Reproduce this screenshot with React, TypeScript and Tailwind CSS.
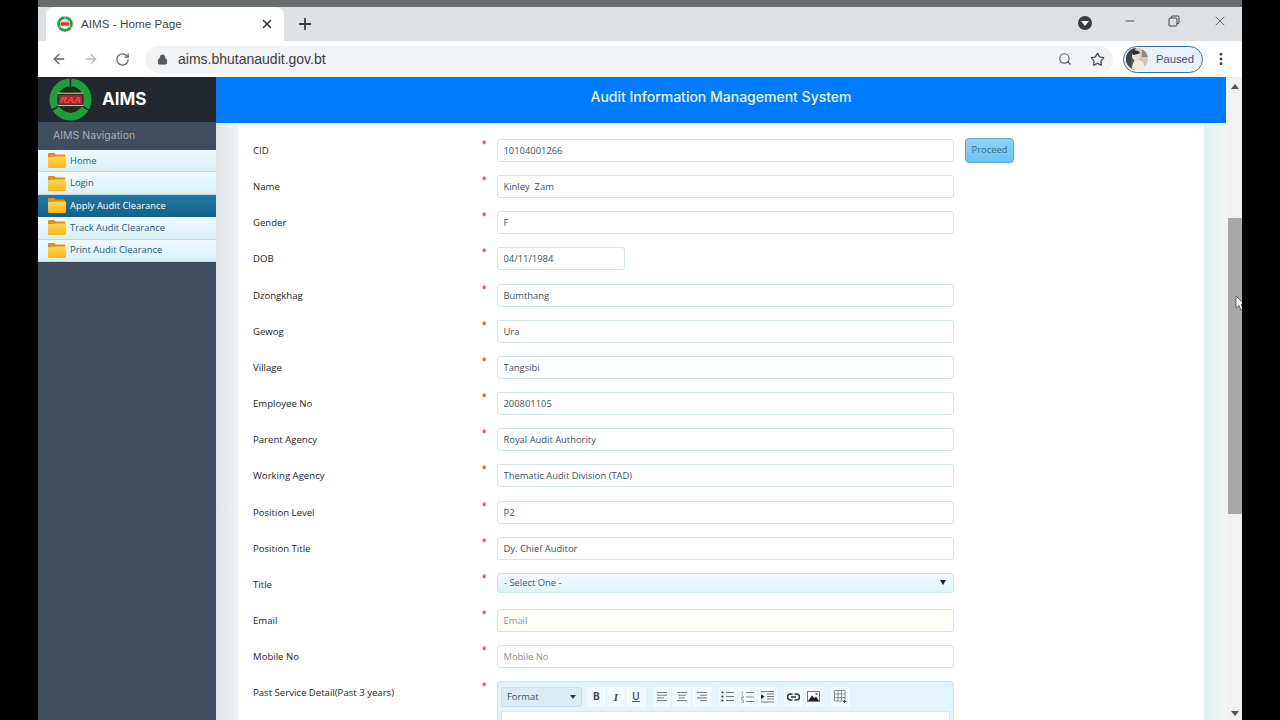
import React from "react";
import { ArrowLeft, ArrowRight, RotateCw, Lock, Search, Star, X, Plus, Minus, MoreVertical } from "lucide-react";

const LogoSvg = ({ size, light }: { size: number; light?: boolean }) => (
  <svg width={size} height={size} viewBox="0 0 44 44" className="shrink-0">
    <circle cx="22" cy="22" r="21.5" fill="#1f9e3d" />
    <circle cx="22" cy="22" r="13.5" fill={light ? "#ffffff" : "#1d2a20"} />
    <path d="M3 33 L13 27 M41 33 L31 27 M22 0 V9" stroke={light ? "#ffffff" : "#23282e"} strokeWidth="1.6" />
    <rect x="9" y="15.5" width="26" height="13" fill={light ? "#ffffff" : "#2c2a22"} />
    <rect x="9" y="15" width="26" height="1.2" fill="#e3c04a" />
    <rect x="10" y="17.5" width="24" height="9" fill="#a62a2c" />
    <rect x="9" y="27.5" width="26" height="1.2" fill="#e3c04a" />
    <text x="22" y="25.5" textAnchor="middle" fontSize="10" fontWeight="700" fontStyle="italic" fill="#f0494c" fontFamily="Liberation Sans, sans-serif">RAA</text>
  </svg>
);

const Folder = () => (
  <svg width="18" height="15" viewBox="0 0 18 15" className="shrink-0">
    <defs>
      <linearGradient id="fg" x1="0" y1="0" x2="0" y2="1">
        <stop offset="0" stopColor="#ffd95a" />
        <stop offset="1" stopColor="#f8b713" />
      </linearGradient>
    </defs>
    <path d="M0 1.2 C0 .5 .5 0 1.2 0 H6 L8 1.6 H16 C16.6 1.6 17 2 17 2.6 V5 H0 Z" fill="#e98d12" />
    <path d="M0 4.2 L8 3.4 H16.8 C17.5 3.4 18 3.9 18 4.6 V13.6 C18 14.4 17.5 15 16.8 15 H1.2 C.5 15 0 14.4 0 13.6 Z" fill="url(#fg)" />
  </svg>
);

const nav = ["Home", "Login", "Apply Audit Clearance", "Track Audit Clearance", "Print Audit Clearance"];

const rows: { label: string; value?: string; placeholder?: string }[] = [
  { label: "CID", value: "10104001266" },
  { label: "Name", value: "Kinley  Zam" },
  { label: "Gender", value: "F" },
  { label: "DOB", value: "04/11/1984" },
  { label: "Dzongkhag", value: "Bumthang" },
  { label: "Gewog", value: "Ura" },
  { label: "Village", value: "Tangsibi" },
  { label: "Employee No", value: "200801105" },
  { label: "Parent Agency", value: "Royal Audit Authority" },
  { label: "Working Agency", value: "Thematic Audit Division (TAD)" },
  { label: "Position Level", value: "P2" },
  { label: "Position Title", value: "Dy. Chief Auditor" },
  { label: "Title" },
  { label: "Email", placeholder: "Email" },
  { label: "Mobile No", placeholder: "Mobile No" },
];

const Label = ({ text }: { text: string }) => (
  <div className="w-[229px] shrink-0 text-[9.6px] font-medium text-[#23272b] leading-[37px]">{text}</div>
);
const Req = () => (
  <div className="w-[15px] shrink-0 text-[8px] font-bold text-[#cf4a45] leading-[12px] pt-[6px]">*</div>
);

const Tool = ({ children }: { children: React.ReactNode }) => (
  <div className="w-[19.6px] h-[20px] flex items-center justify-center text-[#4a4a4a]">{children}</div>
);

const Group = ({ children }: { children: React.ReactNode }) => (
  <div className="flex rounded-[3px] bg-[#f3fafd] divide-x divide-[#e2eff5]">{children}</div>
);

const lineSets: Record<string, number[][]> = {
  left: [[1, 11], [1, 11], [1, 8], [1, 11]],
  center: [[1, 11], [2, 10], [3, 9], [1, 11]],
  right: [[1, 11], [4, 11], [1, 11], [4, 11]],
};
const Lines = ({ kind }: { kind: string }) => (
  <svg width="12" height="11" viewBox="0 0 12 11" stroke="#777" strokeWidth="1">
    {lineSets[kind].map((l, i) => (
      <path key={i} d={`M${l[0]} ${1.5 + i * 2.7} H${l[1]}`} />
    ))}
  </svg>
);
const Bullets = () => (
  <svg width="13" height="11" viewBox="0 0 13 11" stroke="#777" strokeWidth="1" fill="#333">
    <circle cx="1.5" cy="1.5" r="1.1" stroke="none" />
    <circle cx="1.5" cy="5.5" r="1.1" stroke="none" />
    <circle cx="1.5" cy="9.5" r="1.1" stroke="none" />
    <path d="M5 1.5 H13 M5 5.5 H13 M5 9.5 H13" />
  </svg>
);
const Numbers = () => (
  <svg width="13" height="12" viewBox="0 0 13 12" stroke="#888" strokeWidth="1" fill="none">
    <path d="M1.5 0.5 V3.5 M0.5 5 H2.5 V6.5 H0.5 V8 H2.5 M0.5 9.5 H2.5 V11.5 H0.5" strokeWidth="0.7" />
    <path d="M5 1.5 H13 M5 6 H13 M5 10.5 H13" />
  </svg>
);
const Indent = () => (
  <svg width="13" height="12" viewBox="0 0 13 12" stroke="#777" strokeWidth="1">
    <path d="M0 .5 H13 M6 3 H13 M6 5.5 H13 M6 8 H13 M0 11 H13" />
    <path d="M0 3.2 L3.6 5.6 L0 8 Z" fill="#222" stroke="none" />
  </svg>
);
const ImageIcon = () => (
  <svg width="13" height="11" viewBox="0 0 13 11">
    <rect x=".5" y=".5" width="12" height="10" fill="#fff" stroke="#777" />
    <path d="M1 10 L5 4.5 L7.5 7 L9 5.5 L12 10 Z" fill="#222" />
    <circle cx="9.5" cy="2.8" r="1" fill="#555" />
  </svg>
);
const LinkIcon = () => (
  <svg width="13" height="8" viewBox="0 0 13 8" fill="none" stroke="#333" strokeWidth="1.5">
    <path d="M5.5 1 H3.5 A2.8 2.8 0 0 0 3.5 7 H5.5 M7.5 1 H9.5 A2.8 2.8 0 0 1 9.5 7 H7.5 M4 4 H9" />
  </svg>
);
const TableIcon = () => (
  <svg width="13" height="13" viewBox="0 0 13 13" fill="none" stroke="#8a8a8a" strokeWidth="0.9">
    <path d="M.5 .5 H11 V11 H.5 Z M4 .5 V11 M7.5 .5 V11 M.5 4 H11 M.5 7.5 H11" />
    <path d="M10.5 10 V13 M9 11.5 H12.5" stroke="#444" strokeWidth="1" />
  </svg>
);

export default function App() {
  return (
    <div className="w-[1280px] h-[720px] overflow-hidden bg-black flex justify-center font-['Open_Sans',sans-serif]">
      <div className="w-[1204px] h-[720px] flex flex-col bg-white">
        <div className="h-[7px] bg-[#6a6d6d]" />
        {/* tab strip */}
        <div className="h-[34px] bg-[#dee1e4] flex items-end pl-[8px]">
          <div className="w-[238px] h-[34px] bg-white rounded-t-[8px] flex items-center pl-[11px] pr-[10px]">
            <LogoSvg size={16} light />
            <span className="ml-[8px] text-[11.7px] text-[#45494d] font-['Liberation_Sans',sans-serif]">AIMS - Home Page</span>
            <X size={14} strokeWidth={2.4} className="ml-auto text-[#222]" />
          </div>
          <div className="h-[34px] flex items-center ml-[12px]">
            <Plus size={18} strokeWidth={2.4} className="text-[#3a3d40]" />
          </div>
          <div className="ml-auto h-[34px] flex items-start">
            <div className="w-[14px] h-[14px] rounded-full bg-[#3a3d40] mt-[9px] mr-[31px] flex items-center justify-center">
              <div className="w-0 h-0 border-l-[4px] border-r-[4px] border-t-[5px] border-l-transparent border-r-transparent border-t-white" />
            </div>
            <Minus size={14} className="text-[#444] mt-[7px] mr-[31px]" strokeWidth={1.5} />
            <svg width="12" height="12" viewBox="0 0 12 12" className="mt-[8px] mr-[32px]" fill="none" stroke="#444" strokeWidth="1">
              <rect x="1" y="3" width="8" height="8" rx="1" />
              <path d="M3.5 3 V1.5 C3.5 1 4 1 4 1 H10 C10.6 1 11 1.4 11 2 V8 C11 8.5 10.6 8.5 10.5 8.5 H9" />
            </svg>
            <X size={16} className="text-[#444] mt-[6px] mr-[14px]" strokeWidth={1.2} />
          </div>
        </div>
        {/* toolbar */}
        <div className="h-[36px] bg-white flex items-center pl-[13px] pr-[13px]">
          <ArrowLeft size={16} className="text-[#5f6368]" strokeWidth={2} />
          <ArrowRight size={16} className="text-[#b9bcc0] ml-[16px]" strokeWidth={2} />
          <RotateCw size={15} className="text-[#5f6368] ml-[16px]" strokeWidth={2} />
          <div className="ml-[15px] w-[968px] h-[27px] rounded-full bg-[#f1f3f4] flex items-center pl-[12px] pr-[8px]">
            <Lock size={11} className="text-[#55585c]" fill="#55585c" />
            <span className="ml-[10px] text-[14px] text-[#3c4043] font-['Liberation_Sans',sans-serif]">aims.bhutanaudit.gov.bt</span>
            <Search size={14} className="text-[#5f6368] ml-auto" strokeWidth={2} />
            <Star size={15} className="text-[#4a4d50] ml-[18px]" strokeWidth={2} />
          </div>
          <div className="ml-[10px] w-[80px] h-[27px] rounded-full border border-[#3f6e96] bg-[#eaf0f7] flex items-center pl-[2px]">
            <svg width="22" height="22" viewBox="0 0 22 22" className="shrink-0">
              <defs>
                <clipPath id="av"><circle cx="11" cy="11" r="11" /></clipPath>
              </defs>
              <g clipPath="url(#av)">
                <rect width="22" height="22" fill="#cfc8b8" />
                <rect width="8" height="22" fill="#5a5f63" />
                <path d="M0 0 H10 L6 8 L4 22 H0 Z" fill="#3e454b" />
                <circle cx="10" cy="8" r="4" fill="#e8dfd2" />
                <path d="M6 22 C6 14 9 12 12 12 C16 12 19 16 19 22 Z" fill="#f0ebe2" />
                <rect x="16" y="2" width="6" height="7" fill="#8f8b7f" />
                <path d="M6 4 C8 2 12 2 14 5 L12 6 L7 7 Z" fill="#2b2b2b" />
              </g>
            </svg>
            <span className="ml-[8px] text-[11.2px] text-[#4b5a72] font-['Liberation_Sans',sans-serif]">Paused</span>
          </div>
          <MoreVertical size={16} className="text-[#444] ml-[10px]" strokeWidth={2.4} />
        </div>
        {/* page */}
        <div className="flex-1 flex min-h-0">
          <div className="w-[178px] shrink-0 bg-[#3f4d5f] flex flex-col">
            <div className="h-[45px] bg-[#23282e] flex items-center pl-[11px]">
              <LogoSvg size={43} />
              <span className="ml-[10px] text-[17px] font-bold text-white font-['Inter',sans-serif]">AIMS</span>
            </div>
            <div className="h-[28px] flex items-center pl-[15px] text-[10.5px] text-[#a5aeb8] font-['Inter',sans-serif]">AIMS Navigation</div>
            <div className="flex flex-col">
              {nav.map((n, i) => (
                <div
                  key={n}
                  className={
                    "h-[22.4px] flex items-center pl-[10px] text-[9.4px] " +
                    (i === 2
                      ? "bg-[linear-gradient(#2179a6,#145f86)] text-white"
                      : "bg-[linear-gradient(#f0fbff,#d8eff7)] border-b border-[#c0d8e2] text-[#2a5a74]")
                  }
                >
                  <Folder />
                  <span className="ml-[4px]">{n}</span>
                </div>
              ))}
            </div>
          </div>
          <div className="w-[1011px] shrink-0 flex flex-col min-h-0">
            <div className="h-[46px] w-[1010px] shrink-0 bg-[#007bff] flex items-center justify-center pb-[8px] text-[14px] font-medium text-[#eaf3ff] font-['Inter',sans-serif]">
              Audit Information Management System
            </div>
            <div className="flex-1 flex min-h-0 bg-[#eef1f2]">
              <div className="w-[22px] shrink-0 bg-[linear-gradient(90deg,#dfe3e5,#f1f3f4)]" />
              <div className="w-[966px] shrink-0 bg-white pt-[9px] pl-[15px] overflow-hidden">
                {rows.map((r) => (
                  <div key={r.label} className="flex h-[36.17px] items-start">
                    <Label text={r.label} />
                    <Req />
                    {r.label === "Title" ? (
                      <div className="w-[457px] h-[20px] mt-[7px] rounded-[3px] border border-[#cde2ea] bg-[linear-gradient(#f2fbfe,#dff1f8)] flex items-center pl-[6px] pr-[7px] text-[9.4px] text-[#3e6072]">
                        <span>- Select One -</span>
                        <span className="ml-auto w-0 h-0 border-l-[3px] border-r-[3px] border-t-[5px] border-l-transparent border-r-transparent border-t-[#222]" />
                      </div>
                    ) : (
                      <input
                        readOnly
                        defaultValue={r.value}
                        placeholder={r.placeholder}
                        className={
                          "h-[23px] mt-[7px] rounded-[3px] border border-[#d3e5e8] px-[5.5px] text-[9.4px] text-[#3b5360] placeholder:text-[#8b9295] outline-none " +
                          (r.label === "DOB" ? "w-[128px]" : "w-[457px]") +
                          (r.label === "Email" ? " bg-[#fffdf8]" : " bg-white")
                        }
                      />
                    )}
                    {r.label === "CID" && (
                      <button className="ml-[11px] mt-[6px] w-[49px] h-[25px] rounded-[4px] border border-[#5ba5c8] bg-[linear-gradient(#8ad5f8,#6fc3ec)] text-[9.4px] text-[#2d6e8e]">
                        Proceed
                      </button>
                    )}
                  </div>
                ))}
                <div className="flex items-start">
                  <Label text="Past Service Detail(Past 3 years)" />
                  <Req />
                  <div className="w-[457px] h-[60px] mt-[7px] border border-[#cfe4ec] rounded-t-[3px] bg-[#e3f3f9] flex flex-col">
                    <div className="h-[29px] shrink-0 flex items-center pl-[3px]">
                      <div className="w-[81px] h-[20px] rounded-[3px] border border-[#c4dde7] bg-[#dcecf3] flex items-center pl-[5px] pr-[5px] text-[9.4px] text-[#41525c]">
                        <span>Format</span>
                        <span className="ml-auto w-0 h-0 border-l-[3px] border-r-[3px] border-t-[4px] border-l-transparent border-r-transparent border-t-[#333]" />
                      </div>
                      <div className="ml-[5px]">
                        <Group>
                          <Tool><span className="text-[10.5px] font-bold">B</span></Tool>
                          <Tool><span className="text-[11px] italic font-bold font-['Liberation_Serif',serif]">I</span></Tool>
                          <Tool><span className="text-[10.5px] font-semibold underline">U</span></Tool>
                        </Group>
                      </div>
                      <div className="ml-[7px]">
                        <Group>
                          <Tool><Lines kind="left" /></Tool>
                          <Tool><Lines kind="center" /></Tool>
                          <Tool><Lines kind="right" /></Tool>
                        </Group>
                      </div>
                      <div className="ml-[7px]">
                        <Group>
                          <Tool><Bullets /></Tool>
                          <Tool><Numbers /></Tool>
                          <Tool><Indent /></Tool>
                        </Group>
                      </div>
                      <div className="ml-[7px]">
                        <Group>
                          <Tool><LinkIcon /></Tool>
                          <Tool><ImageIcon /></Tool>
                        </Group>
                      </div>
                      <div className="ml-[7px]">
                        <Group>
                          <Tool><TableIcon /></Tool>
                        </Group>
                      </div>
                    </div>
                    <div className="flex-1 mx-[3px] bg-white border border-[#d5e7ee]" />
                  </div>
                </div>
              </div>
              <div className="w-[23px] shrink-0 bg-[linear-gradient(90deg,#e4eeee,#f3f5f5)]" />
            </div>
          </div>
          {/* scrollbar */}
          <div className="w-[15px] shrink-0 bg-[#f1f1f1] flex flex-col items-center relative overflow-hidden">
            <div className="mt-[7px] w-0 h-0 border-l-[4px] border-r-[4px] border-b-[5px] border-l-transparent border-r-transparent border-b-[#505050]" />
            <div className="mt-[129px] w-[14px] h-[296px] bg-[#a8a8a8]" />
            <div className="mt-auto mb-[4px] w-0 h-0 border-l-[4px] border-r-[4px] border-t-[5px] border-l-transparent border-r-transparent border-t-[#505050]" />
            <svg width="10" height="16" viewBox="0 0 10 16" className="absolute left-[8px] top-[218px]">
              <path d="M1 1 V13 L4 10.5 L6 15 L8 14 L6 9.5 H9.5 Z" fill="#fff" stroke="#444" strokeWidth="0.8" />
            </svg>
          </div>
        </div>
      </div>
    </div>
  );
}
